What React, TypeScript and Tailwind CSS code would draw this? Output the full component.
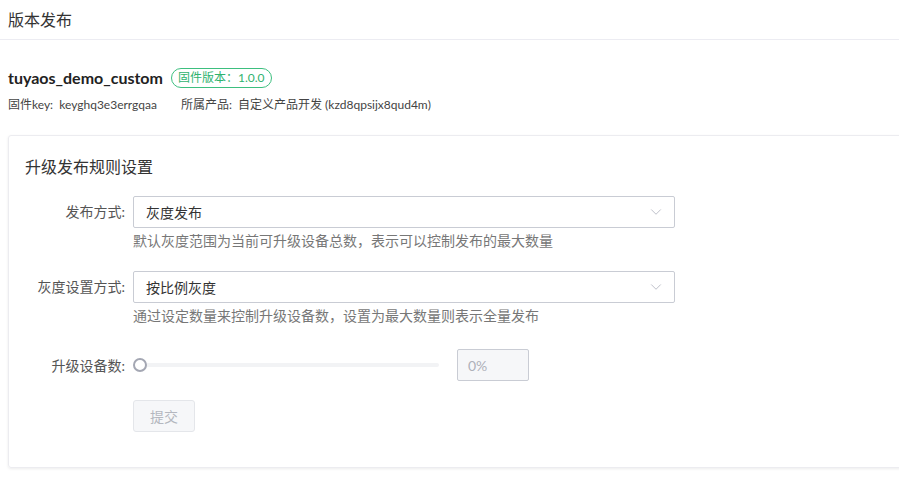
import { ChevronDown } from 'lucide-react';

const font = { fontFamily: '"Lato", "Noto Sans CJK SC", sans-serif' };

function Select({ value }: { value: string }) {
  return (
    <div className="w-[542px] h-[32px] border border-[#c9ccd4] rounded-[2px] flex items-center justify-between pl-[12px] pr-[9px] bg-white">
      <span className="text-[14px] text-[#333]">{value}</span>
      <ChevronDown className="w-[18px] h-[18px] text-[#b0b3bd]" strokeWidth={1.1} />
    </div>
  );
}

export default function App() {
  return (
    <div className="w-[899px] h-[487px] bg-white overflow-hidden" style={font}>
      {/* header */}
      <div className="h-[40px] border-b border-[#ececf2] px-[8px] flex items-center">
        <h1 className="text-[16px] text-[#333] leading-none">版本发布</h1>
      </div>

      {/* firmware info */}
      <div className="px-[8px] pt-[26px]">
        <div className="flex items-center gap-[8px]">
          <span className="text-[16px] font-bold text-[#222]">tuyaos_demo_custom</span>
          <span className="h-[20px] px-[6px] rounded-full border border-[#3dbf7f] text-[#2fb36f] text-[12px] flex items-center">
            固件版本：1.0.0
          </span>
        </div>
        <div className="mt-[6px] flex text-[12px] text-[#444] gap-[24px]">
          <span>固件key:&nbsp;&nbsp;keyghq3e3errgqaa</span>
          <span>所属产品:&nbsp;&nbsp;自定义产品开发 (kzd8qpsijx8qud4m)</span>
        </div>
      </div>

      {/* rule card */}
      <div className="ml-[8px] mt-[21px] w-[900px] h-[333px] border border-[#ececf0] rounded-[3px] shadow-[0_1px_3px_rgba(0,0,0,0.08)] pl-[16px] pt-[19px]">
        <h2 className="text-[16px] text-[#333]">升级发布规则设置</h2>

        <div className="mt-[17px] flex">
          <label className="w-[108px] text-right pr-[8px] text-[14px] text-[#555] leading-[32px]">发布方式:</label>
          <div>
            <Select value="灰度发布" />
            <p className="mt-[2px] text-[14px] text-[#777]">默认灰度范围为当前可升级设备总数，表示可以控制发布的最大数量</p>
          </div>
        </div>

        <div className="mt-[20px] flex">
          <label className="w-[108px] text-right pr-[8px] text-[14px] text-[#555] leading-[32px]">灰度设置方式:</label>
          <div>
            <Select value="按比例灰度" />
            <p className="mt-[2px] text-[14px] text-[#777]">通过设定数量来控制升级设备数，设置为最大数量则表示全量发布</p>
          </div>
        </div>

        <div className="mt-[23px] flex items-center">
          <label className="w-[108px] text-right pr-[8px] text-[14px] text-[#555]">升级设备数:</label>
          <div className="relative w-[306px] h-[14px] flex items-center">
            <div className="w-full h-[4px] bg-[#f2f3f5] rounded-full" />
            <div className="absolute left-0 top-0 w-[14px] h-[14px] rounded-full border-2 border-[#a4a7b3] bg-white" />
          </div>
          <div className="ml-[18px] w-[72px] h-[32px] border border-[#c9ccd4] rounded-[2px] bg-[#f6f7f9] flex items-center pl-[10px] text-[14px] text-[#aeb1ba]">
            0%
          </div>
        </div>

        <div className="mt-[19px] pl-[108px]">
          <button className="w-[62px] h-[32px] border border-[#e4e6ea] rounded-[3px] bg-[#f6f7f9] text-[14px] text-[#b4b7bf]">
            提交
          </button>
        </div>
      </div>
    </div>
  );
}
